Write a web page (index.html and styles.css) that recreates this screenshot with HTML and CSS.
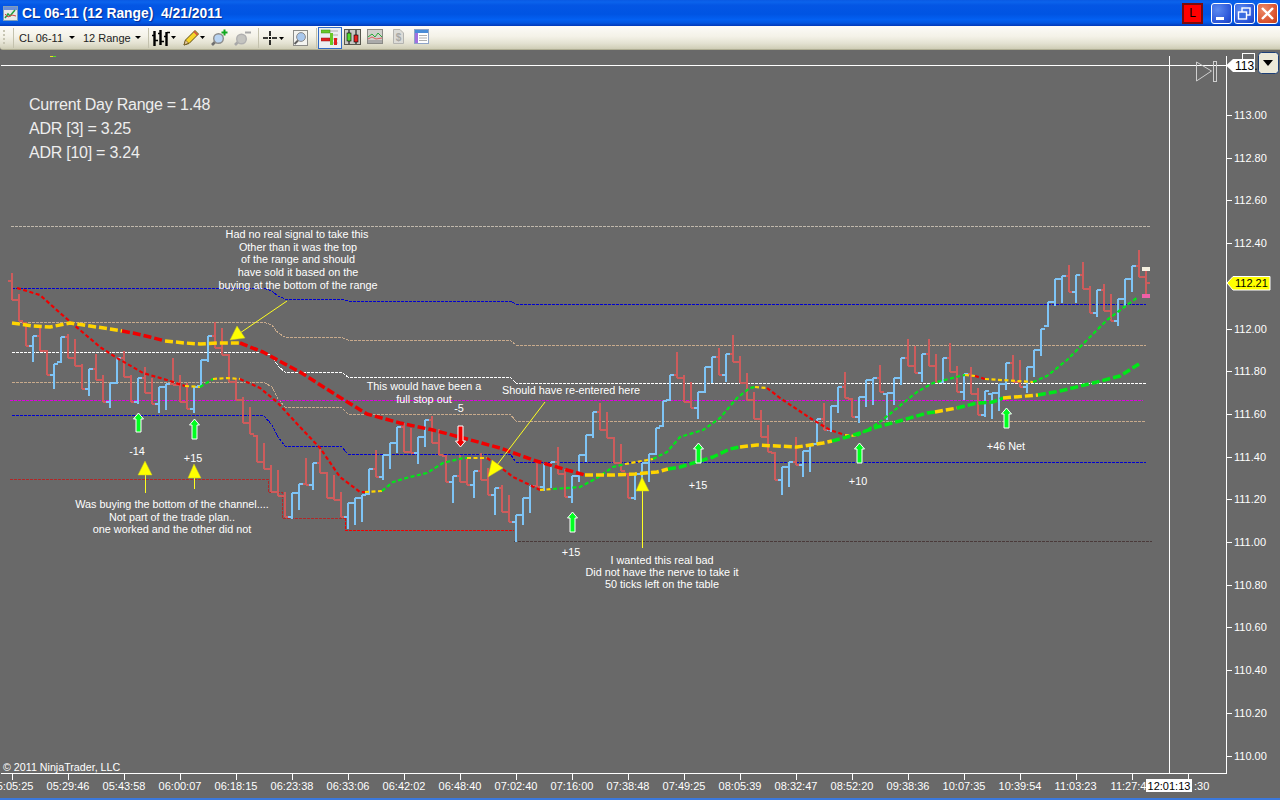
FILE: index.html
```html
<!DOCTYPE html>
<html lang="en">
<head>
  <meta charset="UTF-8" />
  <title>CL 06-11 (12 Range) 4/21/2011</title>
  <link rel="stylesheet" href="styles.css">
</head>
<body>
  <div class="window">
    <div class="titlebar">
      <svg class="app-icon" width="15" height="15" viewBox="0 0 15 15">
        <rect x="0.5" y="0.5" width="14" height="14" fill="#e8e8e8" stroke="#7f9db9"/>
        <rect x="1" y="1" width="13" height="3" fill="#6a8fd8"/>
        <path d="M2 12 L5 8 L7 10 L12 4" fill="none" stroke="#20a040" stroke-width="1.5"/>
        <path d="M2 8 L5 11 L9 9 L13 10" fill="none" stroke="#d04040"/>
      </svg>
      <span class="title">CL 06-11 (12 Range)&nbsp; 4/21/2011</span>
      <div class="title-right">
        <span class="lock">L</span>
        <div class="win-btn">
          <svg width="21" height="21" viewBox="0 0 21 21"><rect x="5" y="14" width="8" height="3" fill="#fff"/></svg>
        </div>
        <div class="win-btn">
          <svg width="21" height="21" viewBox="0 0 21 21" fill="none" stroke="#fff" stroke-width="1.4"><rect x="8" y="5" width="8" height="7"/><rect x="4.5" y="9" width="8" height="7" fill="#3a6be0"/></svg>
        </div>
        <div class="win-btn close">
          <svg width="21" height="21" viewBox="0 0 21 21"><path d="M5 5 L16 16 M16 5 L5 16" stroke="#fff" stroke-width="2.4"/></svg>
        </div>
      </div>
    </div>

    <div class="toolbar">
      <div class="grip"></div>
      <div class="group picks">
        <span class="pick">CL 06-11</span><i class="caret"></i>
        <span class="pick second">12 Range</span><i class="caret"></i>
      </div>
      <div class="group tools-a">
        <svg width="24" height="18" viewBox="0 0 24 18">
          <g stroke="#000" fill="none">
            <path d="M2.5 2 V17 M8.5 1 V16 M14.5 3 V17" stroke-width="2.4"/>
            <path d="M0 6.5 H2 M3 11.5 H6 M6 4.5 H8 M9 12.5 H12 M12 7.5 H14 M15 3.5 H18" stroke-width="1.6"/>
          </g>
          <path d="M19 7 H24 L21.5 10 Z" fill="#000"/>
        </svg>
        <svg width="23" height="18" viewBox="0 0 23 18">
          <path d="M2 16 L3.5 11 L13 1.5 L16.5 5 L7 14.5 Z" fill="#f7d42a" stroke="#5c4a10"/>
          <path d="M2 16 L3.5 11 L6.5 14 Z" fill="#e9c9a0" stroke="#5c4a10" stroke-width="0.6"/>
          <path d="M12 2.5 L15.5 6" stroke="#d84848" stroke-width="1.5"/>
          <path d="M18 7 H23 L20.5 10 Z" fill="#000"/>
        </svg>
        <svg width="17" height="18" viewBox="0 0 17 18">
          <path d="M1 16 L5 12" stroke="#707070" stroke-width="2.6"/>
          <circle cx="7.5" cy="9.500" r="4.8" fill="#b9d4f2" stroke="#8c8c8c" stroke-width="1.4"/>
          <path d="M13.5 0.5 V6.5 M10.5 3.5 H16.5" stroke="#10a820" stroke-width="2"/>
        </svg>
        <svg width="17" height="18" viewBox="0 0 17 18">
          <path d="M1 16 L5 12" stroke="#a8a8a8" stroke-width="2.6"/>
          <circle cx="7.5" cy="10" r="4.8" fill="#c4c4c0" stroke="#b0b0b0" stroke-width="1.4"/>
          <path d="M11 3.5 H17" stroke="#a8a8a8" stroke-width="2"/>
        </svg>
      </div>
      <div class="group tools-b">
        <svg width="22" height="16" viewBox="0 0 22 16">
          <path d="M0 8 H5 M9 8 H14 M7 1 V6 M7 10 V15" stroke="#000" stroke-width="1.6"/>
          <rect x="6" y="7" width="2" height="2" fill="#000"/>
          <path d="M16 7 H21 L18.5 10 Z" fill="#000"/>
        </svg>
        <svg width="15" height="16" viewBox="0 0 15 16">
          <rect x="0.5" y="0.5" width="14" height="15" fill="#f4f4f0" stroke="#8c8c88"/>
          <path d="M1.5 14 L5 10.5" stroke="#606060" stroke-width="2"/>
          <circle cx="8" cy="7" r="4.4" fill="#a9c8ee" stroke="#8c8c8c"/>
        </svg>
      </div>
      <div class="group tools-c">
        <div class="tool-on">
          <svg width="18" height="17" viewBox="0 0 18 17">
            <path d="M9 2 H17 M10 6 H17 M10 10 H17 M10 14 H17" stroke="#b0b0b0"/>
            <rect x="0" y="1" width="9" height="3" fill="#68c828" stroke="#3e8a18" stroke-width="0.5"/>
            <rect x="0" y="9" width="9" height="3" fill="#e02020" stroke="#8a1818" stroke-width="0.5"/>
            <rect x="9" y="4" width="3" height="12" fill="#68c828"/>
            <rect x="13" y="9" width="3" height="7" fill="#e02020"/>
          </svg>
        </div>
        <svg width="21" height="17" viewBox="0 0 21 17">
          <rect x="0.5" y="0.5" width="16" height="15" fill="#c8c8c4" stroke="#58584e"/>
          <path d="M5 1 V15 M12 1 V15" stroke="#000"/>
          <rect x="3" y="4" width="4" height="8" fill="#50d830" stroke="#000" stroke-width="0.6"/>
          <rect x="10" y="6" width="4" height="7" fill="#e82020" stroke="#000" stroke-width="0.6"/>
        </svg>
        <svg width="23" height="17" viewBox="0 0 23 17">
          <rect x="0.5" y="0.5" width="15" height="14" fill="#d0d0cc" stroke="#8a8a86"/>
          <path d="M1 8 L5 5 L8 8 L11 4 L15 8" fill="none" stroke="#28a838"/>
          <path d="M1 10 L5 8 L9 10 L15 9" fill="none" stroke="#d86060"/>
          <rect x="1" y="11" width="14" height="3" fill="#aaa"/>
        </svg>
        <svg width="20" height="17" viewBox="0 0 20 17">
          <path d="M1.5 0.5 H8 L11.5 4 V14.5 H1.5 Z" fill="#dcdcd8" stroke="#b4b4b0"/>
          <text class="doc-sign" x="6.5" y="12">$</text>
        </svg>
        <svg width="15" height="17" viewBox="0 0 15 17">
          <rect x="0.5" y="0.5" width="14" height="14" fill="#fff" stroke="#8fa4c8"/>
          <rect x="1" y="1" width="13" height="3" fill="#4a8cd8"/>
          <rect x="1" y="4" width="3" height="10" fill="#a070e0"/>
          <path d="M5 6.5 H13 M5 9 H13 M5 11.5 H13" stroke="#b0b0b0"/>
        </svg>
      </div>
    </div>

    <div class="chart">
      <svg id="chart" width="1280" height="748" viewBox="0 50 1280 748">
        <g id="levels"></g>
        <g id="bars"></g>
        <g id="averages"></g>
        <g id="axes"></g>

        <text class="info" x="29" y="110">Current Day Range = 1.48</text>
        <text class="info" x="29" y="134">ADR [3] = 3.25</text>
        <text class="info" x="29" y="158">ADR [10] = 3.24</text>
        <text class="copyright" x="3" y="771">© 2011 NinjaTrader, LLC</text>

        <!-- drawings on the chart -->
        <g class="pointers">
          <path d="M240 333 L287 301"/>
          <path d="M497 465 L545 402"/>
          <path d="M145.500 475 V493"/>
          <path d="M194.500 478 V489"/>
          <path d="M642.500 491 V548"/>
        </g>
        <g class="triangles">
          <polygon points="230,340 237,326 245,338"/>
          <polygon points="488,477 492,460 503,468"/>
          <polygon points="145,461 152,475 138,475"/>
          <polygon points="194,464 201,478 188,478"/>
          <polygon points="642,477 649,491 636,491"/>
        </g>
        <g class="arrow-up">
          <polygon points="138.5,413 143.5,419 141,419 141,432 136,432 136,419 133.500,419"/>
          <polygon points="194.500,419 199.500,425 197,425 197,439 192,439 192,425 189.500,425"/>
          <polygon points="572.500,512 577.500,518 575,518 575,532 570,532 570,518 567.500,518"/>
          <polygon points="698.500,443 703.500,449 701,449 701,463 696,463 696,449 693.500,449"/>
          <polygon points="859.500,443 864.500,449 862,449 862,463 857,463 857,449 854.500,449"/>
          <polygon points="1006.500,408 1011.500,414 1009,414 1009,428 1004,428 1004,414 1001.500,414"/>
        </g>
        <polygon class="arrow-down" points="458,426 463,426 463,441 465.500,441 460.500,447 455.500,441 458,441"/>

        <g class="note">
          <text x="297" y="238">Had no real signal to take this</text>
          <text x="298" y="251">Other than it was the top</text>
          <text x="298" y="263">of the range and should</text>
          <text x="298" y="276">have sold it based on the</text>
          <text x="298" y="289">buying at the bottom of the range</text>
          <text x="172" y="508">Was buying the bottom of the channel....</text>
          <text x="172" y="521">Not part of the trade plan..</text>
          <text x="172" y="533">one worked and the other did not</text>
          <text x="137" y="455">-14</text>
          <text x="193" y="462">+15</text>
          <text x="424" y="390">This would have been a</text>
          <text x="424" y="403">full stop out</text>
          <text x="459" y="412">-5</text>
          <text x="571" y="394">Should have re-entered here</text>
          <text x="571" y="556">+15</text>
          <text x="698" y="489">+15</text>
          <text x="858" y="485">+10</text>
          <text x="1006" y="450">+46 Net</text>
          <text x="662" y="564">I wanted this real bad</text>
          <text x="662" y="576">Did not have the nerve to take it</text>
          <text x="662" y="588">50 ticks left on the table</text>
        </g>

        <!-- price markers on the axis -->
        <rect class="mini-tab" x="1242.500" y="53.500" width="12" height="7"/>
        <polygon class="flag-white" points="1226,65.500 1233,59 1255,59 1255,72 1233,72"/>
        <text class="flag-text big" x="1235" y="70">113.</text>
        <polygon class="flag-yellow" points="1227,283 1233,276.500 1270,276.500 1270,290 1233,290"/>
        <text class="flag-text" x="1235" y="287">112.21</text>
        <rect class="flag-white" x="1146" y="779" width="46" height="13"/>
        <text class="time-text" x="1169" y="790">12:01:13</text>

        <g class="end-mark" fill="none">
          <polygon points="1196.500,62 1211.500,71 1196.500,81"/>
          <rect x="1213.500" y="61.500" width="3" height="20"/>
        </g>
        <rect class="axis-btn" x="1258.500" y="52.500" width="20" height="21" rx="3"/>
        <path d="M1263 60 H1273 L1268 66 Z" fill="#000"/>
        <rect x="50" y="56" width="3" height="1" fill="#e8e020"/>
        <rect x="53" y="56" width="3" height="1" fill="#50e020"/>
      </svg>
    </div>
    <div class="edge"></div>
  </div>
  <script src="chart.js"></script>
</body>
</html>
```

FILE: styles.css
```css
body {
  margin: 0;
  overflow: hidden;
  font-family: "Liberation Sans", Arial, sans-serif;
}
.window {
  width: 1280px;
  height: 800px;
  display: flex;
  flex-direction: column;
  background: #696969;
}
/* XP title bar */
.titlebar {
  height: 26px;
  flex: none;
  display: flex;
  align-items: center;
  padding: 0 2px 0 3px;
  background: linear-gradient(#0a5ae4, #0b63ec 8%, #0456e4 20%, #0054e3 55%, #0360f2 75%, #0356e0 88%, #0238b8 100%);
}
.app-icon {
  flex: none;
}
.title {
  margin-left: 4px;
  color: #fff;
  font-size: 13.85px;
  font-weight: bold;
  white-space: nowrap;
  text-shadow: 1px 1px 1px #0a2a90;
}
.title-right {
  margin-left: auto;
  display: flex;
  align-items: center;
  gap: 2px;
}
.lock {
  width: 17px;
  height: 17px;
  margin-right: 6px;
  border: 2px solid #7c0a0a;
  background: #f00;
  color: #000;
  font-size: 12px;
  line-height: 17px;
  text-align: center;
}
.win-btn {
  width: 21px;
  height: 21px;
  border: 1px solid #fff;
  border-radius: 3px;
  box-sizing: border-box;
  overflow: hidden;
  background: radial-gradient(circle at 30% 30%, #5c8af0, #2a55d8 70%, #1c3fb8);
}
.win-btn svg {
  display: block;
  margin: -1px;
}
.win-btn.close {
  background: radial-gradient(circle at 30% 30%, #ec8a68, #d8502c 70%, #b83c1c);
}
/* toolbar */
.toolbar {
  height: 24px;
  flex: none;
  display: flex;
  align-items: center;
  box-sizing: border-box;
  border-bottom: 1px solid #b0ae94;
  border-bottom-left-radius: 3px;
  background: linear-gradient(#fcfbf8, #f4f2e8 45%, #e4e2d2 75%, #cfcdb6);
  color: #222;
  font-size: 11px;
}
.grip {
  width: 2px;
  height: 16px;
  margin: 0 8px 0 3px;
  background: repeating-linear-gradient(#c8c6b4 0 2px, transparent 2px 4px);
}
.group {
  height: 20px;
  display: flex;
  align-items: center;
  border-left: 1px solid #c4c2ae;
}
.picks {
  padding: 0 7px 0 5px;
}
.pick {
  width: 43px;
  white-space: nowrap;
}
.pick.second {
  width: 45px;
  margin-left: 8px;
}
.caret {
  width: 0;
  height: 0;
  margin-left: 7px;
  border: 3px solid transparent;
  border-top: 3px solid #000;
  border-bottom: 0;
}
.tools-a {
  gap: 6px;
  padding: 0 7px 0 3px;
}
.tools-b {
  gap: 8px;
  padding: 0 8px 0 4px;
}
.tools-c {
  gap: 2px;
  padding-left: 1px;
}
.tool-on {
  width: 24px;
  height: 22px;
  box-sizing: border-box;
  border: 1px solid #316ac5;
  background: #ebeef2;
  display: flex;
  align-items: center;
  justify-content: center;
}
.doc-sign {
  font-size: 10px;
  font-weight: bold;
  fill: #a8a8a4;
  text-anchor: middle;
}
/* chart */
.chart {
  flex: 1;
  overflow: hidden;
}
#chart {
  display: block;
}
.edge {
  height: 2px;
  flex: none;
  background: #3a78dc;
}
.level {
  fill: none;
  stroke-width: 1;
  stroke-dasharray: 3 1;
  shape-rendering: crispEdges;
}
.bar {
  fill: none;
  stroke-width: 2;
  shape-rendering: crispEdges;
}
.avg-slow,
.avg-fast {
  fill: none;
  stroke-linejoin: round;
}
.avg-slow {
  stroke-width: 3.5;
  stroke-dasharray: 8 3;
}
.avg-fast {
  stroke-width: 2.2;
  stroke-dasharray: 4 2.5;
}
.axis-line {
  stroke: #fff;
  stroke-width: 1;
  shape-rendering: crispEdges;
}
.label,
.time-label {
  fill: #fff;
  font-size: 11px;
}
.copyright {
  fill: #fff;
  font-size: 10.7px;
}
.note text {
  fill: #fff;
  font-size: 10.85px;
  text-anchor: middle;
}
.info {
  fill: #eee;
  font-size: 16px;
  letter-spacing: -0.25px;
}
.pointers path {
  fill: none;
  stroke: #ffff20;
  stroke-width: 1;
}
.triangles polygon {
  fill: #ffff00;
  stroke: #c8c820;
  stroke-width: 0.5;
}
.arrow-up polygon {
  fill: #00ff20;
  stroke: #fff;
  stroke-width: 1;
}
.arrow-down {
  fill: #f00000;
  stroke: #fff;
  stroke-width: 1;
}
.mini-tab {
  fill: none;
  stroke: #fff;
}
.flag-white {
  fill: #fff;
}
.flag-yellow {
  fill: #ffff00;
  stroke: #fff;
}
.flag-text {
  fill: #000;
  font-size: 11px;
}
.flag-text.big {
  font-size: 12px;
}
.time-text {
  fill: #000;
  font-size: 11px;
  text-anchor: middle;
}
.end-mark {
  stroke: #cfcfcf;
  stroke-width: 1;
}
.axis-btn {
  fill: #ece9d8;
  stroke: #1c3f78;
}
```

FILE: chart.js
```js
// All y values are page pixels, same as the viewBox of the svg.
const NS = 'http://www.w3.org/2000/svg';
const RED = '#cd5c5c';
const BLUE = '#7ec4f6';
const LEVEL_TAN = '#c8aa8c';
const GOLD = '#ffd400';
const RD = '#f00000';
const GR = '#00e818';

function add(parent, tag, attrs, text) {
  const el = document.createElementNS(NS, tag);
  Object.keys(attrs).forEach(k => el.setAttribute(k, attrs[k]));
  if (text) el.textContent = text;
  document.getElementById(parent).appendChild(el);
  return el;
}

// Range bars, one every 7px from x=12. [top, bottom, up?]
const BARS = [
  [273,300,0],[294,321,0],[322,346,0],[336,362,1],[325,351,0],[350,375,0],[364,389,1],[337,363,1],
  [334,358,0],[339,366,0],[364,389,0],[369,396,1],[354,380,0],[375,402,0],[383,408,1],[358,384,1],
  [351,377,0],[375,402,0],[378,404,1],[367,393,0],[378,404,0],[387,413,1],[384,410,1],[358,385,0],
  [375,402,0],[383,409,0],[387,413,1],[360,387,1],[336,362,1],[322,348,0],[328,355,0],[354,382,0],
  [378,400,0],[397,423,0],[407,434,0],[435,462,0],[443,469,0],[465,492,0],[470,496,0],[492,517,0],
  [493,519,1],[484,510,1],
  [458,485,0],[463,490,1],[447,473,0],[472,498,0],[475,500,0],[492,517,0],[503,529,1],[498,525,1],
  [495,522,1],[469,495,1],[450,477,0],[455,480,1],[443,469,1],[427,453,1],[423,452,0],[428,453,0],
  [437,464,1],[420,447,1],[416,443,0],[429,455,0],[455,482,0],[476,503,1],[455,482,0],[458,485,0],
  [471,498,1],[453,480,0],[468,495,0],[488,515,1],[485,512,0],[495,522,0],[515,542,1],[498,525,1],
  [486,513,1],[461,487,0],[464,491,1],[462,488,1],[447,474,0],[469,497,0],[476,503,1],[455,482,1],
  [435,462,1],[412,438,1],
  [403,430,0],[412,438,0],[437,463,0],[444,471,0],[473,498,0],[474,500,1],[463,489,1],[454,482,1],
  [428,455,1],[401,427,1],[375,401,1],[352,378,0],[375,402,0],[382,408,0],[392,419,1],[367,393,1],
  [357,383,1],[348,375,0],[354,382,1],[335,362,0],[356,383,0],[373,400,0],[392,419,0],[410,437,0],
  [425,452,0],[452,480,0],[467,495,1],[462,487,1],[437,465,0],[451,477,1],[445,472,1],[419,445,1],
  [403,430,0],[406,432,1],[387,413,1],[372,398,0],[398,417,0],[397,423,1],[380,407,1],[378,405,1],
  [365,392,0],[393,420,1],[378,405,1],[358,385,1],[339,366,0],[346,373,0],[354,382,1],[339,366,0],
  [354,382,0],[358,383,1],[343,372,0],[366,392,0],[374,400,1],[367,394,0],[388,415,0],[391,417,1],
  [393,419,1],[384,411,1],[363,390,1],[355,382,0],[360,387,0],[367,393,1],[350,377,1],[329,356,1],
  [302,327,1],[279,306,1],[276,303,1],[265,292,0],[275,303,1],[262,289,0],[286,313,0],[290,317,1],
  [284,311,0],[294,321,0],[299,326,1],[279,306,1],[266,292,1],[250,277,0],[270,296,0]
];

function drawBars() {
  let prevClose = BARS[0][0] + 8;
  const paths = { 0: '', 1: '' };
  BARS.forEach((b, i) => {
    const x = 12 + i * 7;
    const close = b[2] ? b[0] : b[1];
    const open = Math.min(b[1] - 1, Math.max(b[0] + 1, prevClose));
    paths[b[2]] += `M${x} ${b[0]}V${b[1]}M${x - 4} ${open}H${x}M${x} ${close}H${x + 4}`;
    prevClose = close;
  });
  add('bars', 'path', { class: 'bar', stroke: RED, d: paths[0] });
  add('bars', 'path', { class: 'bar', stroke: BLUE, d: paths[1] });
  add('bars', 'rect', { x: 1142, y: 267, width: 8, height: 4, fill: '#f4f0e0' });
  add('bars', 'rect', { x: 1142, y: 294, width: 8, height: 4, fill: '#f060a8' });
  add('bars', 'rect', { x: 1147, y: 282, width: 3, height: 2, fill: RED });
}

// Support and resistance lines, stepping down at the same bars.
const LEVELS = [
  ['#c0b8ac', [[11,226],[1150,226]]],
  ['#0000d0', [[12,288],[263,288],[272,291],[278,296],[285,299],[341,299],[348,301],[510,301],[516,304],[1146,304]]],
  [LEVEL_TAN, [[12,322],[263,322],[272,325],[278,333],[285,337],[341,337],[348,340],[510,340],[516,345],[1146,345]]],
  ['#ffffff', [[12,352],[263,352],[272,356],[278,366],[285,372],[341,372],[348,377],[510,377],[516,383],[1146,383]]],
  [LEVEL_TAN, [[12,382],[263,382],[272,387],[278,399],[285,407],[341,407],[348,414],[510,414],[516,421],[1146,421]]],
  ['#0000d0', [[12,415],[263,415],[272,425],[278,437],[285,446],[341,446],[348,454],[510,454],[516,462],[1146,462]]],
  ['#e000e0', [[10,400],[1143,400]]],
  ['#b02828', [[10,479],[268,479],[268,492],[282,492],[282,518],[345,518]]],
  ['#f00000', [[345,518],[345,530],[514,530]]],
  ['#4a3a3a', [[514,541],[1152,541]]]
];

function polyPoints(pts) {
  return pts.map(p => p.join(',')).join(' ');
}

function drawLevels() {
  LEVELS.forEach(l => {
    add('levels', 'polyline', { class: 'level', stroke: l[0], points: polyPoints(l[1]) });
  });
}

// Moving averages, split where the trend colour changes.
const SLOW = [
  [GOLD, [[12,323],[33,326],[50,327],[70,323],[90,326],[110,329],[122,331]]],
  [RD, [[122,331],[133,333],[150,337],[165,341]]],
  [GOLD, [[165,341],[185,343],[200,344],[217,343],[240,343]]],
  [RD, [[240,343],[263,352],[283,363],[300,372],[333,393],[367,414],[400,423],[433,430],[467,439],[500,448],[533,460],[567,470],[585,475]]],
  [GOLD, [[585,475],[613,475],[635,474],[657,472],[668,469]]],
  [GR, [[668,469],[680,467],[713,457],[730,449],[740,447]]],
  [GOLD, [[740,447],[757,445],[797,447],[823,443],[832,441]]],
  [GR, [[832,441],[847,437],[860,433],[877,427],[903,420],[927,413],[935,412]]],
  [GOLD, [[935,412],[957,408]]],
  [GR, [[957,408],[977,403],[993,402],[1003,398]]],
  [GOLD, [[1003,398],[1038,395]]],
  [GR, [[1038,395],[1060,391],[1093,383],[1120,376],[1139,364]]]
];
const FAST = [
  [RD, [[17,288],[40,295],[60,313],[80,330],[100,347],[117,358],[143,373],[167,380],[185,386]]],
  [GOLD, [[185,386],[200,387]]],
  [GR, [[200,387],[213,379]]],
  [GOLD, [[213,379],[227,378],[240,379]]],
  [RD, [[240,379],[260,388],[277,402],[300,427],[320,448],[340,477],[360,492],[365,492]]],
  [GOLD, [[365,492],[382,491]]],
  [GR, [[382,491],[393,482],[410,477],[427,473],[443,463],[463,458],[467,458]]],
  [GOLD, [[467,458],[487,458]]],
  [RD, [[487,458],[500,467],[513,477],[530,485],[540,490]]],
  [GOLD, [[540,490],[553,489]]],
  [GR, [[553,489],[580,487],[597,478],[613,467],[625,464]]],
  [GOLD, [[625,464],[653,459]]],
  [GR, [[653,459],[667,452],[680,437],[703,430],[720,418],[737,398],[750,388],[755,387]]],
  [GOLD, [[755,387],[767,388]]],
  [RD, [[767,388],[780,398],[810,418],[830,430],[845,435]]],
  [GOLD, [[845,435],[857,436]]],
  [GR, [[857,436],[880,422],[907,400],[917,392],[933,383],[960,376],[965,375]]],
  [GOLD, [[965,375],[975,376]]],
  [RD, [[975,376],[985,379]]],
  [GOLD, [[985,379],[1033,382]]],
  [GR, [[1033,382],[1047,376],[1067,360],[1087,340],[1107,320],[1123,308],[1138,297]]]
];

function drawAverages() {
  FAST.forEach(s => add('averages', 'polyline', { class: 'avg-fast', stroke: s[0], points: polyPoints(s[1]) }));
  SLOW.forEach(s => add('averages', 'polyline', { class: 'avg-slow', stroke: s[0], points: polyPoints(s[1]) }));
}

const TIMES = ['5:05:25','05:29:46','05:43:58','06:00:07','06:18:15','06:23:38','06:33:06','06:42:02',
  '06:48:40','07:02:40','07:16:00','07:38:48','07:49:25','08:05:39','08:32:47','08:52:20','09:38:36',
  '10:07:35','10:39:54','11:03:23','11:27:4',':30'];
const PRICES = ['113.00','112.80','112.60','112.40',null,'112.00','111.80','111.60','111.40','111.20',
  '111.00','110.80','110.60','110.40','110.20','110.00'];

function line(x1, y1, x2, y2) {
  add('axes', 'line', { class: 'axis-line', x1: x1, y1: y1, x2: x2, y2: y2 });
}

function drawAxes() {
  line(1, 65.5, 1228, 65.5);
  line(1, 773.5, 1226, 773.5);
  line(1169.5, 56, 1169.5, 773);
  line(1226.5, 56, 1226.5, 774);
  TIMES.forEach((t, i) => {
    const x = 12 + i * 56;
    line(x + 0.5, 774, x + 0.5, 780);
    // first and last two labels are partly hidden in the app, keep the visible bit in place
    let textX = x - 21.4;
    if (i === 0) textX = -3.3;
    if (i === TIMES.length - 1) textX = 1194;
    add('axes', 'text', { class: 'time-label', x: textX, y: 790 }, t);
  });
  PRICES.forEach((p, i) => {
    if (!p) return;
    const y = Math.round(115 + i * 42.7);
    line(1226, y + 0.5, 1232, y + 0.5);
    add('axes', 'text', { class: 'label', x: 1234, y: y + 4 }, p);
  });
}

drawLevels();
drawBars();
drawAverages();
drawAxes();
```
